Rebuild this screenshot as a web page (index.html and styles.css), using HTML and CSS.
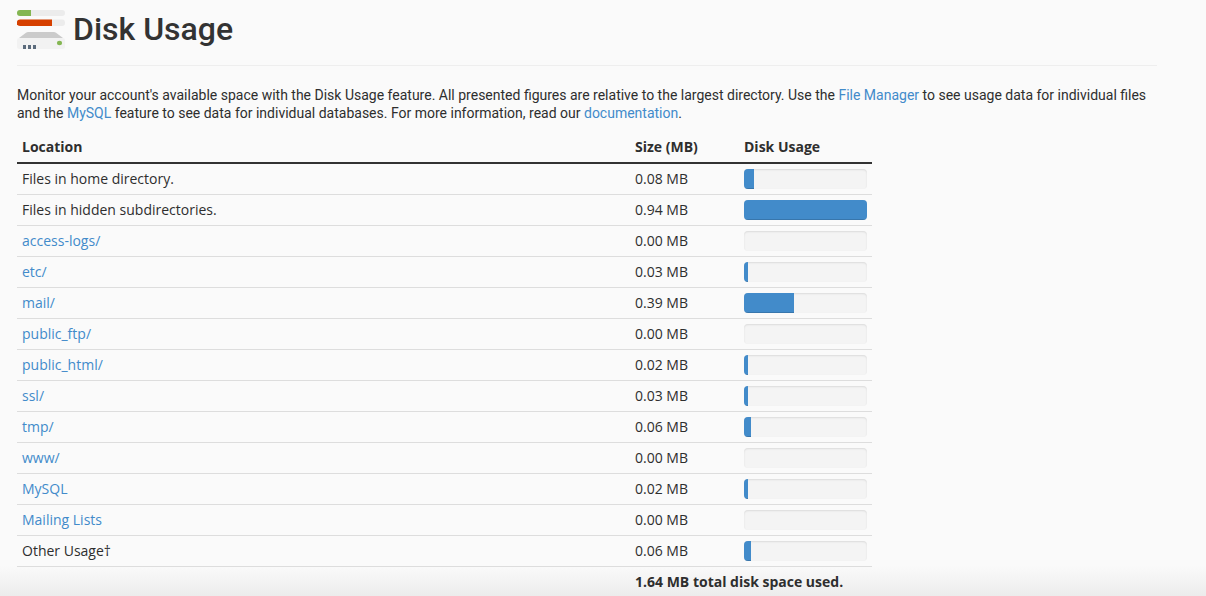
FILE: index.html
```html
<!DOCTYPE html>
<html lang="en">
<head>
  <meta charset="UTF-8" />
  <meta name="viewport" content="width=device-width, initial-scale=1.0" />
  <title>Disk Usage</title>
  <link rel="stylesheet" href="styles.css">
</head>
<body>
  <div class="content">
    <h1 class="page-header">
      <svg class="page-icon" width="48" height="40" viewBox="0 0 48 40">
        <rect x="0" y="0" width="48" height="6" rx="3" fill="#ececec"/>
        <path d="M3 0H14V6H3A3 3 0 0 1 3 0Z" fill="#84b652"/>
        <rect x="0" y="9.5" width="48" height="6.5" rx="3" fill="#ececec"/>
        <path d="M3 9.5H35V16H3A3.25 3.25 0 0 1 3 9.5Z" fill="#d64000"/>
        <path d="M11 22H37Q38 22 39 22.700L46 28H2L9 22.700Q10 22 11 22Z" fill="#cbcbcb"/>
        <rect x="0" y="28" width="48" height="11" rx="2.500" fill="#f2f2f2"/>
        <path d="M6 35h3v4h-3zM11 35h3v4h-3zM16 35h3v4h-3z" fill="#5b6b7c"/>
        <ellipse cx="42.500" cy="33" rx="2.600" ry="2.200" fill="#84b652"/>
      </svg>
      <span class="page-title">Disk Usage</span>
    </h1>

    <p class="description">
      Monitor your account's available space with the Disk Usage feature. All presented figures are relative to the largest directory. Use the <a href="#">File Manager</a> to see usage data for individual files<br>and the <a href="#">MySQL</a> feature to see data for individual databases. For more information, read our <a href="#">documentation</a>.
    </p>

    <table class="usage-table">
      <thead>
        <tr><th class="col-location">Location</th><th class="col-size">Size (MB)</th><th class="col-usage">Disk Usage</th></tr>
      </thead>
      <tbody>
        <tr><td>Files in home directory.</td><td>0.08 MB</td><td><div class="progress"><div class="bar" style="width: 10px"></div></div></td></tr>
        <tr><td>Files in hidden subdirectories.</td><td>0.94 MB</td><td><div class="progress"><div class="bar" style="width: 100%"></div></div></td></tr>
        <tr><td><a href="#">access-logs/</a></td><td>0.00 MB</td><td><div class="progress"></div></td></tr>
        <tr><td><a href="#">etc/</a></td><td>0.03 MB</td><td><div class="progress"><div class="bar" style="width: 4px"></div></div></td></tr>
        <tr><td><a href="#">mail/</a></td><td>0.39 MB</td><td><div class="progress"><div class="bar" style="width: 50px"></div></div></td></tr>
        <tr><td><a href="#">public_ftp/</a></td><td>0.00 MB</td><td><div class="progress"></div></td></tr>
        <tr><td><a href="#">public_html/</a></td><td>0.02 MB</td><td><div class="progress"><div class="bar" style="width: 4px"></div></div></td></tr>
        <tr><td><a href="#">ssl/</a></td><td>0.03 MB</td><td><div class="progress"><div class="bar" style="width: 4px"></div></div></td></tr>
        <tr><td><a href="#">tmp/</a></td><td>0.06 MB</td><td><div class="progress"><div class="bar" style="width: 7px"></div></div></td></tr>
        <tr><td><a href="#">www/</a></td><td>0.00 MB</td><td><div class="progress"></div></td></tr>
        <tr><td><a href="#">MySQL</a></td><td>0.02 MB</td><td><div class="progress"><div class="bar" style="width: 4px"></div></div></td></tr>
        <tr><td><a href="#">Mailing Lists</a></td><td>0.00 MB</td><td><div class="progress"></div></td></tr>
        <tr><td>Other Usage†</td><td>0.06 MB</td><td><div class="progress"><div class="bar" style="width: 7px"></div></div></td></tr>
      </tbody>
      <tfoot>
        <tr><td></td><td colspan="2">1.64 MB total disk space used.</td></tr>
      </tfoot>
    </table>
  </div>
</body>
</html>
```

FILE: styles.css
```css
* {
  box-sizing: border-box;
}

html {
  height: 100%;
  overflow: hidden;
}

body {
  margin: 0;
  height: 100%;
  overflow: hidden;
  background: #fafafa linear-gradient(to bottom, #fafafa 0%, #ececec 100%) no-repeat bottom / 100% 30px;
  font-family: "Open Sans", sans-serif;
  font-size: 14px;
  line-height: 20px;
  color: #2e2e2e;
}

a {
  color: #428bca;
  text-decoration: none;
}

.content {
  width: 1140px;
  margin-left: 17px;
}

.page-header {
  display: flex;
  align-items: flex-start;
  gap: 8px;
  height: 66px;
  margin: 0;
  padding-top: 10px;
  border-bottom: 1px solid #eee;
}

.page-title {
  font-family: Roboto, sans-serif;
  font-size: 32px;
  font-weight: 500;
  line-height: 38px;
  color: #333;
}

.description {
  margin: 20px 0 10px;
  font-family: Roboto, sans-serif;
  line-height: 18px;
  white-space: nowrap;
}

.usage-table {
  width: 855px;
  table-layout: fixed;
  border-collapse: separate;
  border-spacing: 0;
}

.usage-table th,
.usage-table td {
  padding: 5px;
  text-align: left;
  white-space: nowrap;
}

.usage-table th {
  border-bottom: 2px solid #333;
  font-weight: 700;
}

.usage-table td {
  border-bottom: 1px solid #ddd;
}

.usage-table tfoot td {
  border-bottom: 0;
  font-weight: 700;
}

.col-location {
  width: 613px;
}

.col-size {
  width: 109px;
}

.col-usage {
  width: 133px;
}

.progress {
  height: 20px;
  overflow: hidden;
  background: #f4f4f4;
  border-radius: 4px;
  box-shadow: inset 0 1px 2px rgba(0, 0, 0, 0.1);
}

.bar {
  height: 100%;
  background: #428bca;
  box-shadow: inset 0 -1px 0 rgba(0, 0, 0, 0.15);
}
```
